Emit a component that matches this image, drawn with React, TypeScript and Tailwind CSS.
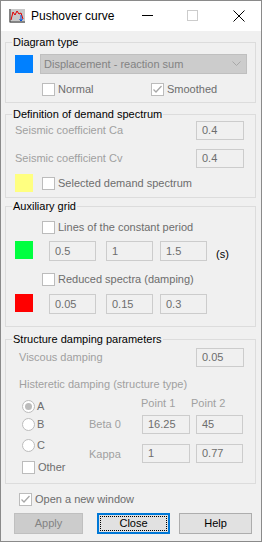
import React from 'react';

const font = { fontFamily: '"Liberation Sans", Arial, sans-serif' };

function Check({ checked = false }: { checked?: boolean }) {
  return (
    <span className="w-[13px] h-[13px] border border-[#bcbcbc] bg-white flex items-center justify-center shrink-0">
      {checked && (
        <svg width="11" height="11" viewBox="0 0 11 11">
          <path d="M1.5 5.5 L4 8 L9.5 2" fill="none" stroke="#a8a8a8" strokeWidth="1.3" />
        </svg>
      )}
    </span>
  );
}

function Radio({ checked = false }: { checked?: boolean }) {
  return (
    <span className="w-[13px] h-[13px] rounded-full border border-[#bcbcbc] bg-white flex items-center justify-center shrink-0">
      {checked && <span className="w-[7px] h-[7px] rounded-full bg-[#bcbcbc]" />}
    </span>
  );
}

function Field({ value, w }: { value: string; w: string }) {
  return (
    <div className={`${w} h-[19px] border border-[#cccccc] bg-[#f0f0f0] pl-[5px] flex items-center text-[11px] text-[#6d6d6d] shrink-0`}>
      {value}
    </div>
  );
}

function Group({ title, children, className }: { title: string; children: React.ReactNode; className: string }) {
  return (
    <fieldset className={`ml-[4px] w-[251px] border border-[#dcdcdc] ${className}`}>
      <legend className="ml-[6px] px-[1px] text-[11px] leading-[14px] text-black">{title}</legend>
      {children}
    </fieldset>
  );
}

export default function App() {
  return (
    <div className="w-[262px] h-[542px] border border-[#8a8a8a] bg-[#f0f0f0] flex flex-col overflow-hidden" style={font}>
      {/* title bar */}
      <div className="h-[30px] bg-white flex items-center shrink-0 relative">
        <svg className="ml-[8px]" width="16" height="14" viewBox="0 0 16 14">
          <rect x="0" y="0" width="16" height="14" fill="#c8c8c8" />
          <path d="M1 0 V13 H16" fill="none" stroke="#404040" strokeWidth="1" />
          <path d="M2 11 L4 3 L6 6 L8 2 L10 5 L12 4 L14 10" fill="none" stroke="#e00000" strokeWidth="1" />
          <path d="M12 6 V12 M10.5 10 L12 12 L13.5 10" fill="none" stroke="#0050e0" strokeWidth="1" />
        </svg>
        <span className="ml-[6px] text-[12px] text-black">Pushover curve</span>
        <span className="absolute left-[141px] top-[14px] w-[11px] h-[1px] bg-black" />
        <span className="absolute left-[186px] top-[9px] w-[11px] h-[11px] border border-[#cccccc]" />
        <svg className="absolute left-[232px] top-[9px]" width="12" height="12" viewBox="0 0 12 12">
          <path d="M0.5 0.5 L11.5 11.5 M11.5 0.5 L0.5 11.5" stroke="#000" strokeWidth="1" />
        </svg>
      </div>

      {/* Diagram type */}
      <Group title="Diagram type" className="mt-[4px] pb-[5px]">
        <div className="mt-[5px] h-[20px] flex items-center">
          <span className="ml-[9px] w-[18px] h-[18px] bg-[#0080ff]" />
          <div className="ml-[7px] w-[207px] h-[20px] bg-[#cccccc] border border-[#bfbfbf] flex items-center justify-between pl-[3px] pr-[5px] text-[11px] text-[#838383]">
            <span>Displacement - reaction sum</span>
            <svg width="9" height="6" viewBox="0 0 9 6">
              <path d="M0.5 0.5 L4.5 4.5 L8.5 0.5" fill="none" stroke="#a8a8a8" strokeWidth="1" />
            </svg>
          </div>
        </div>
        <div className="mt-[8px] h-[15px] flex items-center text-[11px] text-[#6d6d6d]">
          <div className="ml-[36px] w-[109px] flex items-center gap-[3px]">
            <Check />
            <span>Normal</span>
          </div>
          <div className="flex items-center gap-[3px]">
            <Check checked />
            <span>Smoothed</span>
          </div>
        </div>
      </Group>

      {/* Definition of demand spectrum */}
      <Group title="Definition of demand spectrum" className="mt-[4px] pb-[5px]">
        <div className="h-[19px] flex items-center text-[11px] text-[#a0a0a0]">
          <span className="ml-[9px] w-[181px]">Seismic coefficient Ca</span>
          <Field value="0.4" w="w-[48px]" />
        </div>
        <div className="mt-[9px] h-[19px] flex items-center text-[11px] text-[#a0a0a0]">
          <span className="ml-[9px] w-[181px]">Seismic coefficient Cv</span>
          <Field value="0.4" w="w-[48px]" />
        </div>
        <div className="mt-[6px] h-[18px] flex items-center text-[11px] text-[#6d6d6d]">
          <span className="ml-[9px] w-[18px] h-[18px] bg-[#ffff80]" />
          <div className="ml-[9px] flex items-center gap-[3px]">
            <Check />
            <span>Selected demand spectrum</span>
          </div>
        </div>
      </Group>

      {/* Auxiliary grid */}
      <Group title="Auxiliary grid" className="mt-[1px] pb-[12px]">
        <div className="mt-[7px] h-[15px] flex items-center text-[11px] text-[#6d6d6d]">
          <div className="ml-[36px] flex items-center gap-[3px]">
            <Check />
            <span>Lines of the constant period</span>
          </div>
        </div>
        <div className="mt-[6px] h-[20px] flex items-start">
          <span className="ml-[9px] w-[18px] h-[18px] bg-[#00ff40]" />
          <div className="ml-[16px]"><Field value="0.5" w="w-[47px] h-[20px]" /></div>
          <div className="ml-[10px]"><Field value="1" w="w-[47px] h-[20px]" /></div>
          <div className="ml-[7px]"><Field value="1.5" w="w-[47px] h-[20px]" /></div>
          <span className="ml-[9px] mt-[6px] text-[11px] leading-[14px] text-black">(s)</span>
        </div>
        <div className="mt-[11px] h-[15px] flex items-center text-[11px] text-[#6d6d6d]">
          <div className="ml-[36px] flex items-center gap-[3px]">
            <Check />
            <span>Reduced spectra (damping)</span>
          </div>
        </div>
        <div className="mt-[7px] h-[20px] flex items-start">
          <span className="ml-[9px] w-[18px] h-[18px] bg-[#ff0000]" />
          <div className="ml-[16px]"><Field value="0.05" w="w-[47px] h-[20px]" /></div>
          <div className="ml-[10px]"><Field value="0.15" w="w-[47px] h-[20px]" /></div>
          <div className="ml-[7px]"><Field value="0.3" w="w-[47px] h-[20px]" /></div>
        </div>
      </Group>

      {/* Structure damping parameters */}
      <Group title="Structure damping parameters" className="mt-[5px] pb-[9px]">
        <div className="mt-[2px] h-[19px] flex items-center text-[11px] text-[#a0a0a0]">
          <span className="ml-[13px] w-[177px]">Viscous damping</span>
          <Field value="0.05" w="w-[48px]" />
        </div>
        <div className="mt-[10px] h-[14px] flex items-center text-[11px] text-[#a0a0a0]">
          <span className="ml-[13px]">Histeretic damping (structure type)</span>
        </div>
        <div className="mt-[3px] flex items-start text-[11px]">
          <div className="ml-[16px] w-[67px] flex flex-col text-[#6d6d6d]">
            <div className="mt-[6px] h-[13px] flex items-center gap-[2px]">
              <Radio checked />
              <span>A</span>
            </div>
            <div className="mt-[5px] h-[13px] flex items-center gap-[2px]">
              <Radio />
              <span>B</span>
            </div>
            <div className="mt-[8px] h-[13px] flex items-center gap-[2px]">
              <Radio />
              <span>C</span>
            </div>
            <div className="mt-[9px] h-[13px] flex items-center gap-[3px]">
              <Check />
              <span>Other</span>
            </div>
          </div>
          <div className="flex flex-col text-[#a0a0a0]">
            <div className="mt-[2px] h-[14px] flex items-center">
              <span className="ml-[52px] w-[50px]">Point 1</span>
              <span>Point 2</span>
            </div>
            <div className="mt-[5px] h-[19px] flex items-center">
              <span className="w-[53px]">Beta 0</span>
              <Field value="16.25" w="w-[48px]" />
              <div className="ml-[6px]"><Field value="45" w="w-[47px]" /></div>
            </div>
            <div className="mt-[10px] h-[19px] flex items-center">
              <span className="w-[53px] mt-[2px]">Kappa</span>
              <Field value="1" w="w-[48px]" />
              <div className="ml-[6px]"><Field value="0.77" w="w-[47px]" /></div>
            </div>
          </div>
        </div>
      </Group>

      <div className="mt-[9px] h-[13px] ml-[18px] flex items-center gap-[3px] text-[11px] text-[#6d6d6d]">
        <Check checked />
        <span>Open a new window</span>
      </div>

      <div className="mt-[7px] h-[21px] flex text-[11px]">
        <button className="ml-[13px] w-[69px] h-[21px] bg-[#cccccc] border border-[#bfbfbf] text-[#838383]">Apply</button>
        <button className="ml-[14px] w-[73px] h-[21px] bg-[#e1e1e1] border-2 border-[#0078d7] text-black p-[1px]">
          <span className="w-full h-full flex items-center justify-center border border-dotted border-black">Close</span>
        </button>
        <button className="ml-[9px] w-[73px] h-[21px] bg-[#e1e1e1] border border-[#adadad] text-black">Help</button>
      </div>
    </div>
  );
}
